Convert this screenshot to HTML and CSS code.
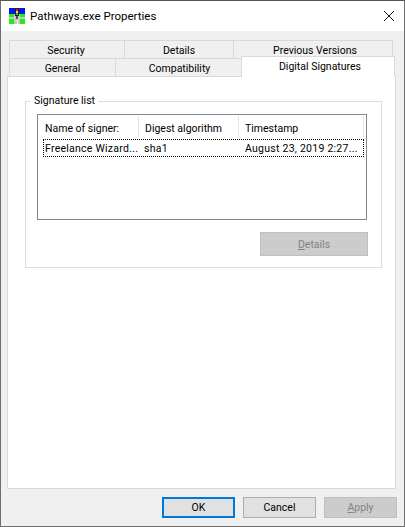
FILE: index.html
```html
<!DOCTYPE html>
<html lang="en">
<head>
<meta charset="utf-8">
<title>Pathways.exe Properties</title>
<link rel="stylesheet" href="styles.css">
</head>
<body>
<div class="window">
  <header class="titlebar">
    <svg class="app-icon" width="16" height="16" viewBox="0 0 16 16" shape-rendering="crispEdges">
      <rect width="16" height="6" fill="#0018f0"/>
      <rect y="6" width="16" height="10" fill="#18f018"/>
      <rect y="9" width="16" height="2" fill="#c8c8c8"/>
      <rect x="5" y="6" width="6" height="10" fill="#c8c8c8"/>
      <rect x="8" y="12" width="1" height="4" fill="#f0f0f0"/>
      <rect x="6" y="0" width="4" height="8" fill="#202020"/>
      <rect x="7" y="1" width="2" height="2" fill="#e81818"/>
      <rect x="7" y="3" width="2" height="2" fill="#f0e818"/>
      <rect x="7" y="5" width="2" height="2" fill="#18c018"/>
      <rect x="7" y="8" width="2" height="3" fill="#505050"/>
    </svg>
    <span class="title-text">Pathways.exe Properties</span>
    <svg class="close-icon" width="10" height="10" viewBox="0 0 10 10">
      <path d="M0 0L10 10M10 0L0 10" stroke="#111" stroke-width="1" fill="none"/>
    </svg>
  </header>
  <main class="body">
    <div class="tabs">
      <div class="tab-row tab-row-back">
        <div class="tab tab-security">Security</div>
        <div class="tab tab-details">Details</div>
        <div class="tab tab-previous">Previous Versions</div>
      </div>
      <div class="tab-row tab-row-front">
        <div class="tab tab-general">General</div>
        <div class="tab tab-compat">Compatibility</div>
        <div class="tab tab-active">Digital Signatures</div>
      </div>
    </div>
    <section class="panel">
      <fieldset class="group">
        <legend class="group-label">Signature list</legend>
        <div class="list">
          <div class="list-head">
            <div class="col col-name">Name of signer:</div>
            <div class="col col-algo">Digest algorithm</div>
            <div class="col col-time">Timestamp</div>
          </div>
          <div class="list-row">
            <div class="cell cell-name">Freelance Wizard...</div>
            <div class="cell cell-algo">sha1</div>
            <div class="cell cell-time">August 23, 2019 2:27...</div>
          </div>
        </div>
        <div class="group-actions">
          <button class="btn btn-off btn-details" type="button"><u>D</u>etails</button>
        </div>
      </fieldset>
    </section>
    <footer class="footer">
      <button class="btn btn-default" type="button">OK</button>
      <button class="btn" type="button">Cancel</button>
      <button class="btn btn-off" type="button"><u>A</u>pply</button>
    </footer>
  </main>
</div>
</body>
</html>
```

FILE: styles.css
```css
* { box-sizing: border-box; }
html, body { margin: 0; height: 100%; }
body {
  font-family: Roboto, "Noto Sans", sans-serif;
  font-size: 10.5px;
  color: #000;
  background: #f0f0f0;
}
.window {
  width: 405px;
  height: 527px;
  display: flex;
  flex-direction: column;
  border: 1px solid #6e6e6e;
  border-top-color: #555;
  background: #f0f0f0;
  overflow: hidden;
}
.titlebar {
  height: 30px;
  flex: none;
  display: flex;
  align-items: center;
  background: #fff;
  padding: 0 10px 0 8px;
}
.app-icon { flex: none; }
.title-text {
  margin-left: 5px;
  font-size: 11.5px;
  flex: 1;
}
.close-icon { flex: none; }
.body {
  flex: 1;
  display: flex;
  flex-direction: column;
  padding: 9px 7px 0 6px;
  min-height: 0;
}
.tabs { flex: none; height: 36px; padding-left: 2px; }
.tab-row { display: flex; height: 18px; }
.tab {
  height: 18px;
  text-align: center;
  line-height: 19px;
  background: #f0f0f0;
  border: 1px solid #d9d9d9;
  border-bottom: 0;
  margin-right: -1px;
}
.tab-security { width: 116px; padding-right: 2px; }
.tab-details { width: 110px; }
.tab-previous { width: 160px; padding-left: 4px; }
.tab-general { width: 107px; }
.tab-compat { width: 127px; padding-left: 2px; }
.tab-active {
  width: 154px;
  height: 21px;
  margin-top: -2px;
  background: #fff;
  position: relative;
  z-index: 1;
  line-height: 19px;
  padding-left: 4px;
}
.panel {
  flex: none;
  width: 389px;
  height: 413px;
  background: #fff;
  border: 1px solid #d9d9d9;
  padding: 17px 13px 0 17px;
}
.group {
  margin: 0;
  height: 174px;
  border: 1px solid #dcdcdc;
  padding: 0 14px 0 11px;
  min-width: 0;
}
.group-label {
  padding: 0 3px 0 4px;
  margin-left: -7px;
  line-height: 14px;
}
.list {
  height: 106px;
  margin-top: 6px;
  border: 1px solid #82878c;
  padding-top: 1px;
  background: #fff;
}
.list-head { display: flex; height: 22px; }
.col {
  line-height: 25px;
  padding-left: 6px;
  border-right: 1px solid #e5e5e5;
}
.col-name { width: 101px; padding-left: 7px; }
.col-algo { width: 100px; }
.col-time { width: 125px; }
.list-row {
  display: flex;
  height: 18px;
  margin-left: 5px;
  margin-right: 2px;
  margin-top: 1px;
  line-height: 17px;
  border: 1px dotted #000;
  letter-spacing: 0.25px;
}
.cell { white-space: nowrap; overflow: hidden; }
.cell-name { width: 100px; padding-left: 1px; }
.cell-algo { width: 101px; }
.cell-time { width: 118px; color: #000; }
.group-actions {
  display: flex;
  justify-content: flex-end;
  margin-top: 12px;
  margin-right: -1px;
}
.btn {
  width: 73px;
  height: 21px;
  padding: 0;
  font: inherit;
  background: #e1e1e1;
  border: 1px solid #adadad;
  color: #000;
  border-radius: 0;
}
.btn-off {
  background: #cccccc;
  border-color: #bfbfbf;
  color: #838383;
}
.btn-details { width: 108px; height: 24px; }
.btn-default {
  border: 2px solid #0078d7;
}
.footer {
  flex: 1;
  display: flex;
  justify-content: flex-end;
  gap: 8px;
  padding-top: 8px;
}
```
